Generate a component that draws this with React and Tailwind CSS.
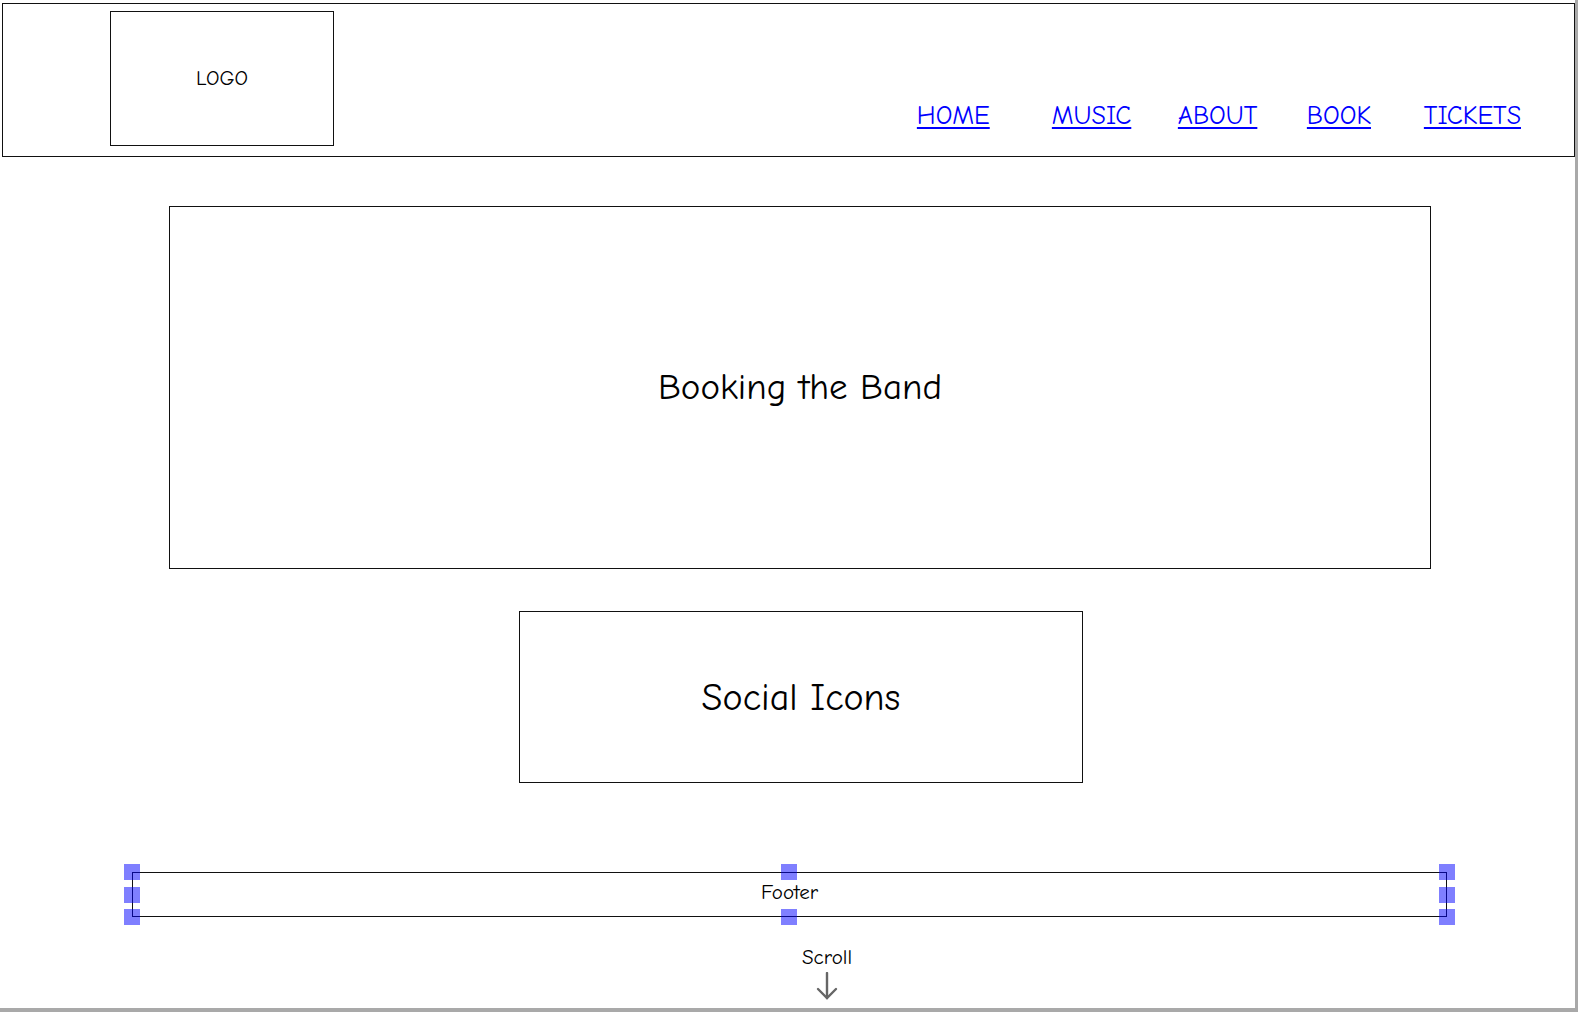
const font = { fontFamily: '"Comic Sans MS", "Comic Neue", "Noto Sans", sans-serif' };

const Handle = ({ className }) => (
  <div className={`absolute w-[16px] h-[16px] bg-[#0000ff]/50 ${className}`} />
);

const navItems = [
  { label: "HOME", w: "w-[135px]" },
  { label: "MUSIC", w: "w-[126px]" },
  { label: "ABOUT", w: "w-[129px]" },
  { label: "BOOK", w: "w-[117px]" },
  { label: "TICKETS", w: "" },
];

export default function App() {
  return (
    <div
      className="w-[1578px] h-[1012px] bg-white border-r-[3px] border-b-[4px] border-[#a9a9a9] flex flex-col text-black overflow-hidden"
      style={font}
    >
      {/* Header */}
      <header className="mt-[3px] ml-[2px] w-[1573px] h-[154px] shrink-0 border border-[#111] flex">
        <div className="ml-[107px] mt-[7px] w-[224px] h-[135px] border border-[#111] flex items-center justify-center text-[21px]">
          LOGO
        </div>
        <nav className="ml-auto mr-[53px] mt-[99px] flex text-[26px] leading-none">
          {navItems.map((item) => (
            <div key={item.label} className={item.w}>
              <a href="#" className="text-[#0000ff] underline underline-offset-[3px]">
                {item.label}
              </a>
            </div>
          ))}
        </nav>
      </header>

      {/* Hero */}
      <section className="mt-[49px] ml-[169px] w-[1262px] h-[363px] shrink-0 border border-[#111] flex items-center justify-center text-[37px]">
        Booking the Band
      </section>

      {/* Social */}
      <section className="mt-[42px] ml-[519px] w-[564px] h-[172px] shrink-0 border border-[#111] flex items-center justify-center text-[38px] pt-[2px]">
        Social Icons
      </section>

      {/* Footer (selected) */}
      <footer className="mt-[89px] ml-[132px] w-[1315px] h-[45px] shrink-0 border border-[#111] relative flex items-center justify-center text-[21px]">
        <span className="-mt-[3px]">Footer</span>
        <Handle className="-left-[9px] -top-[9px]" />
        <Handle className="-left-[9px] top-[14px]" />
        <Handle className="-left-[9px] -bottom-[9px]" />
        <Handle className="left-[648px] -top-[9px]" />
        <Handle className="left-[648px] -bottom-[9px]" />
        <Handle className="-right-[9px] -top-[9px]" />
        <Handle className="-right-[9px] top-[14px]" />
        <Handle className="-right-[9px] -bottom-[9px]" />
      </footer>

      {/* Scroll hint */}
      <div className="mt-[30px] ml-[796px] w-[62px] flex flex-col items-center">
        <span className="text-[21px] leading-none">Scroll</span>
        <svg width="22" height="28" viewBox="0 0 22 28" className="mt-[4px]" fill="none" stroke="#666" strokeWidth="2.4" strokeLinecap="round">
          <path d="M11 1 V26" />
          <path d="M2 17 L11 26 L20 17" />
        </svg>
      </div>
    </div>
  );
}
